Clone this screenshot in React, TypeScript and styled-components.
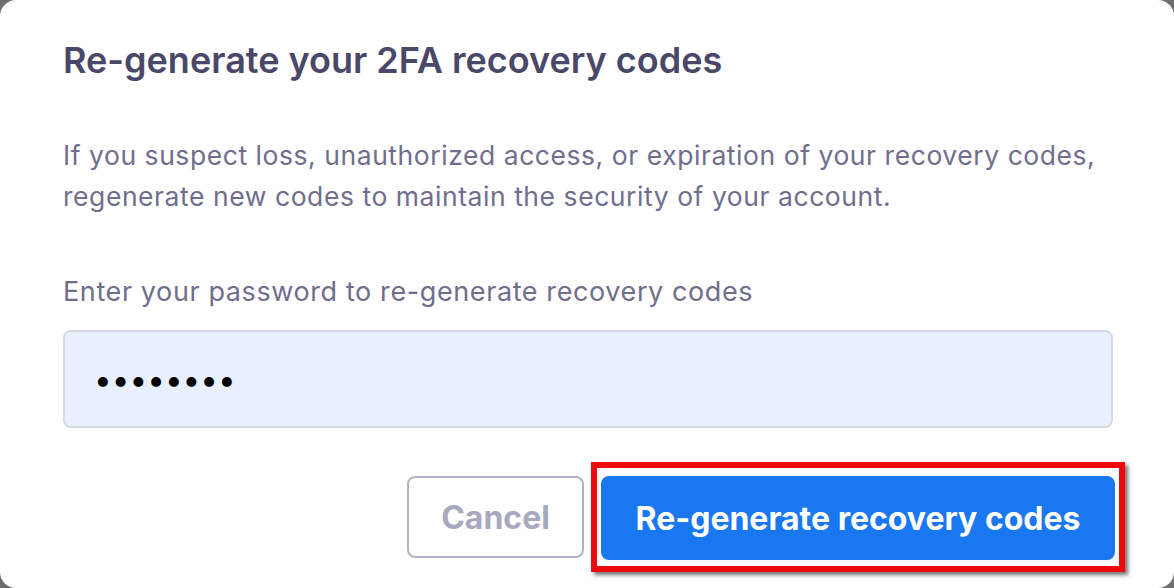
import styled, { createGlobalStyle } from "styled-components";

const GlobalStyle = createGlobalStyle`
  html, body {
    margin: 0;
    padding: 0;
    background: #6f6f6f;
  }
  * {
    box-sizing: border-box;
  }
`;

const App = () => {
  return (
    <>
      <GlobalStyle />
      <Dialog>
        <Title>Re-generate your 2FA recovery codes</Title>
        <Description>
          If you suspect loss, unauthorized access, or expiration of your
          recovery codes, regenerate new codes to maintain the security of your
          account.
        </Description>
        <Label htmlFor="password">
          Enter your password to re-generate recovery codes
        </Label>
        <PasswordInput
          id="password"
          type="password"
          value="12345678"
          readOnly
        />
        <Actions>
          <CancelButton type="button">Cancel</CancelButton>
          <Highlight>
            <PrimaryButton type="button">Re-generate recovery codes</PrimaryButton>
          </Highlight>
        </Actions>
      </Dialog>
    </>
  );
};

const Dialog = styled.div`
  width: 1174px;
  height: 588px;
  background: #fff;
  border-radius: 16px;
  padding: 40px 61px 0 63px;
  display: flex;
  flex-direction: column;
  font-family: Inter, "Noto Sans", sans-serif;
`;

const Title = styled.h2`
  margin: 0;
  font-size: 36px;
  line-height: 41px;
  font-weight: 600;
  color: #4a4868;
`;

const Description = styled.p`
  margin: 54px 0 0;
  font-size: 26.5px;
  line-height: 41px;
  letter-spacing: 0.55px;
  font-weight: 400;
  color: #6f6e8d;
`;

const Label = styled.label`
  margin-top: 57px;
  font-size: 27px;
  line-height: 36px;
  letter-spacing: 0.6px;
  color: #6f6e8d;
`;

const PasswordInput = styled.input`
  margin-top: 20px;
  width: 100%;
  height: 98px;
  padding: 0 29px;
  background: #e8f0fe;
  border: 2px solid #d5d9e1;
  border-radius: 8px;
  font-family: Inter, "Noto Sans", sans-serif;
  font-size: 31.5px;
  color: #000;
  outline: none;
`;

const Actions = styled.div`
  margin-top: 34px;
  display: flex;
  justify-content: flex-end;
  align-items: center;
  gap: 7px;
  margin-right: -12px;
`;

const BaseButton = styled.button`
  height: 84px;
  padding: 0 30px;
  border-radius: 8px;
  font-family: Inter, "Noto Sans", sans-serif;
  font-size: 32px;
  font-weight: 700;
  cursor: pointer;
`;

const CancelButton = styled(BaseButton)`
  width: 177px;
  height: 82px;
  background: #fff;
  color: #a8a8bf;
  border: 2px solid #b3b3c7;
`;

const PrimaryButton = styled(BaseButton)`
  width: 514px;
  background: #1a77f2;
  color: #fff;
  border: none;
`;

const Highlight = styled.span`
  display: inline-flex;
  padding: 8px 4px 6px 4px;
  border: 6px solid #ec0910;
  box-shadow: 3px 3px 4px rgba(0, 0, 0, 0.55);
`;

export default App;
